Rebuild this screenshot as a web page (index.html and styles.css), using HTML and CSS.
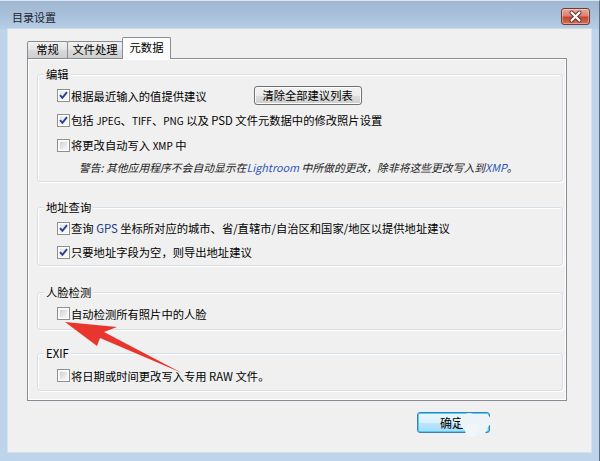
FILE: index.html
```html
<!DOCTYPE html>
<html lang="zh-CN">
<head>
    <meta charset="UTF-8">
    <title>目录设置</title>
    <link rel="stylesheet" href="styles.css">
</head>
<body>
    <div class="window">
        <div class="titlebar">
            <span class="title">目录设置</span>
            <span class="close">
                <svg width="29" height="17" viewBox="0 0 29 17">
                    <path d="M10.5 4.5 L18.5 12.5 M18.5 4.5 L10.5 12.5" stroke="#5a3030" stroke-width="4" stroke-linecap="round"/>
                    <path d="M10.5 4.5 L18.5 12.5 M18.5 4.5 L10.5 12.5" stroke="#fff" stroke-width="2.2" stroke-linecap="round"/>
                </svg>
            </span>
        </div>

        <div class="client">
            <div class="tabs">
                <div class="tab tab-general">常规</div>
                <div class="tab tab-files">文件处理</div>
                <div class="tab tab-meta active">元数据</div>
            </div>

            <div class="panel">
                <fieldset class="group group-edit">
                    <legend>编辑</legend>
                    <div class="row">
                        <span class="cb checked"></span>
                        <span class="label">根据最近输入的值提供建议</span>
                        <span class="btn">清除全部建议列表</span>
                    </div>
                    <div class="row">
                        <span class="cb checked"></span>
                        <span class="label">包括 <span class="latin">JPEG</span>、<span class="latin">TIFF</span>、<span class="latin">PNG</span> 以及 PSD 文件元数据中的修改照片设置</span>
                    </div>
                    <div class="row">
                        <span class="cb"></span>
                        <span class="label">将更改自动写入 <span class="latin">XMP</span> 中</span>
                    </div>
                    <div class="warning">警告: 其他应用程序不会自动显示在<span class="blue">Lightroom</span> 中所做的更改，除非将这些更改写入到<span class="blue">XMP</span>。</div>
                </fieldset>

                <fieldset class="group group-address">
                    <legend>地址查询</legend>
                    <div class="row">
                        <span class="cb checked"></span>
                        <span class="label">查询 <span class="blue">GPS</span> 坐标所对应的城市、省/直辖市/自治区和国家/地区以提供地址建议</span>
                    </div>
                    <div class="row">
                        <span class="cb checked"></span>
                        <span class="label">只要地址字段为空，则导出地址建议</span>
                    </div>
                </fieldset>

                <fieldset class="group group-face">
                    <legend>人脸检测</legend>
                    <div class="row">
                        <span class="cb"></span>
                        <span class="label">自动检测所有照片中的人脸</span>
                    </div>
                </fieldset>

                <fieldset class="group group-exif">
                    <legend>EXIF</legend>
                    <div class="row">
                        <span class="cb"></span>
                        <span class="label">将日期或时间更改写入专用 RAW 文件。</span>
                    </div>
                </fieldset>
            </div>

            <div class="actions">
                <span class="ok">确定
                    <svg class="blob" width="34" height="30" viewBox="0 0 34 30">
                        <circle cx="11" cy="13" r="9" fill="#eef3f7"/>
                        <circle cx="20" cy="17" r="10" fill="#eef3f7"/>
                        <circle cx="26" cy="12" r="7" fill="#eef3f7"/>
                        <circle cx="14" cy="21" r="7" fill="#f2f6f9"/>
                    </svg>
                </span>
            </div>
        </div>

        <svg class="arrow" width="600" height="461" viewBox="0 0 600 461">
            <polygon points="65,321 117,326 104,331 182,372 100,337 97,345" fill="#e8362e"/>
        </svg>
    </div>
</body>
</html>
```

FILE: styles.css
```css
body {
    margin: 0;
    font-family: "Noto Sans CJK SC", "Noto Sans", sans-serif;
    font-size: 11.3px;
    color: #000;
}

.window {
    position: relative;
    width: 600px;
    height: 461px;
    box-sizing: border-box;
    display: flex;
    flex-direction: column;
    background: linear-gradient(#9fb7d2 0, #a9c0da 14px, #b6cde6 28px, #bdd4eb 29px, #bdd4eb);
    border-top: 1px solid #dbe6f1;
    border-right: 1px solid #5d6f85;
    overflow: hidden;
}

.titlebar {
    height: 27px;
    display: flex;
    align-items: center;
    justify-content: space-between;
    padding: 0 9px 0 12px;
}

.title {
    font-size: 11px;
    color: #1b2430;
    line-height: 14px;
    margin-top: 5px;
}

.close {
    width: 29px;
    height: 17px;
    box-sizing: border-box;
    border: 1px solid #6a3c3c;
    border-radius: 3px;
    background: linear-gradient(#e9a89a 0, #d9826f 45%, #c3452e 55%, #d5705a 100%);
    box-shadow: inset 0 0 0 1px rgba(255, 255, 255, 0.35);
    display: flex;
    margin-top: 3px;
}

.close svg {
    margin: -1px;
}

.client {
    flex: 1;
    margin: 0 7px 8px 7px;
    background: #f0f0f0;
    border: 1px solid #d6e2ee;
    border-top-color: #cfdbe8;
    display: flex;
    flex-direction: column;
}

/* tabs */
.tabs {
    display: flex;
    align-items: flex-end;
    margin: 8px 0 0 19px;
    height: 21px;
}

.tab {
    height: 17px;
    box-sizing: border-box;
    border: 1px solid #898c95;
    border-bottom: none;
    background: linear-gradient(#f2f2f2, #e3e3e3 50%, #d9d9d9 51%, #cfcfcf);
    text-align: center;
    line-height: 15px;
    border-radius: 2px 2px 0 0;
}

.tab-general { width: 41px; }
.tab-files { width: 56px; margin-left: -1px; }

.tab.active {
    width: 49px;
    height: 22px;
    margin-left: -1px;
    margin-bottom: -1px;
    background: #fbfbfb;
    line-height: 18px;
    position: relative;
    z-index: 1;
}

.panel {
    margin: 0 24px 0 19px;
    border: 1px solid #898c95;
    background: #f0f0f0;
    box-shadow: inset 1px 1px 0 #fff, inset -1px -1px 0 #fff;
    padding: 8px 3px 9px 9px;
    display: flex;
    flex-direction: column;
}

/* group boxes */
.group {
    margin: 0;
    border: 1px solid #d5dfe5;
    border-radius: 3px;
    box-shadow: inset 1px 1px 0 #fff, 1px 1px 0 #fff;
    padding: 2px 0 0 6px;
    min-width: 0;
}

.group legend {
    padding: 0 2px;
    line-height: 14px;
    background: #f0f0f0;
}

.group-edit { padding-bottom: 5px; }
.group-address { margin-top: 18px; padding-bottom: 1px; }
.group-address .row { height: 24px; }
.group-face { margin-top: 19px; padding-bottom: 3px; }
.group-exif { margin-top: 16px; padding-top: 3px; padding-bottom: 2px; }

.row {
    height: 25px;
    display: flex;
    align-items: center;
    padding-left: 13px;
    white-space: nowrap;
}

.label {
    margin-left: 1px;
    line-height: 14px;
}

.latin {
    font-size: 10px;
}

.blue {
    color: #1a3a8a;
}

.warning {
    font-style: italic;
    font-size: 10.8px;
    line-height: 18px;
    padding-left: 35px;
    color: #1a1a1a;
    white-space: nowrap;
}

.warning .blue {
    color: #2a55b8;
}

/* checkbox */
.cb {
    width: 13px;
    height: 13px;
    box-sizing: border-box;
    border: 1px solid #8e8f8f;
    padding: 2px;
    background: linear-gradient(135deg, #cdd1d7, #f6f6f6) content-box, #f4f4f4;
    box-shadow: inset 0 0 0 1px #fff;
    flex-shrink: 0;
}

.cb.checked {
    background: url("data:image/svg+xml;utf8,<svg xmlns='http://www.w3.org/2000/svg' width='11' height='11' viewBox='0 0 11 11'><path d='M2 5.2 L4.4 7.8 L9 2.2' fill='none' stroke='%23283f8e' stroke-width='1.9'/></svg>") center / 11px 11px no-repeat, linear-gradient(135deg, #dfe3e8, #fbfbfb) content-box, #f4f4f4;
}

/* buttons */
.btn {
    margin-left: 47px;
    height: 19px;
    width: 108px;
    box-sizing: border-box;
    border: 1px solid #707070;
    border-radius: 3px;
    background: linear-gradient(#f2f2f2 0, #ebebeb 50%, #dddddd 51%, #cfcfcf 100%);
    box-shadow: inset 0 0 0 1px #fcfcfc;
    text-align: center;
    line-height: 17px;
}

.actions {
    display: flex;
    justify-content: flex-end;
    padding: 11px 101px 0 0;
}

.ok {
    position: relative;
    width: 73px;
    height: 21px;
    box-sizing: border-box;
    border: 1px solid #3c7fb1;
    border-radius: 3px;
    background: linear-gradient(#eaf6fd 0, #d9f0fc 50%, #bee6fd 51%, #a7d9f5 100%);
    box-shadow: inset 0 0 0 1px #48d0f8;
    text-align: center;
    line-height: 19px;
    font-size: 12px;
    padding-right: 3px;
}

.blob {
    position: absolute;
    left: 40px;
    top: -4px;
}

.arrow {
    position: absolute;
    left: 0;
    top: 0;
    pointer-events: none;
}
```
